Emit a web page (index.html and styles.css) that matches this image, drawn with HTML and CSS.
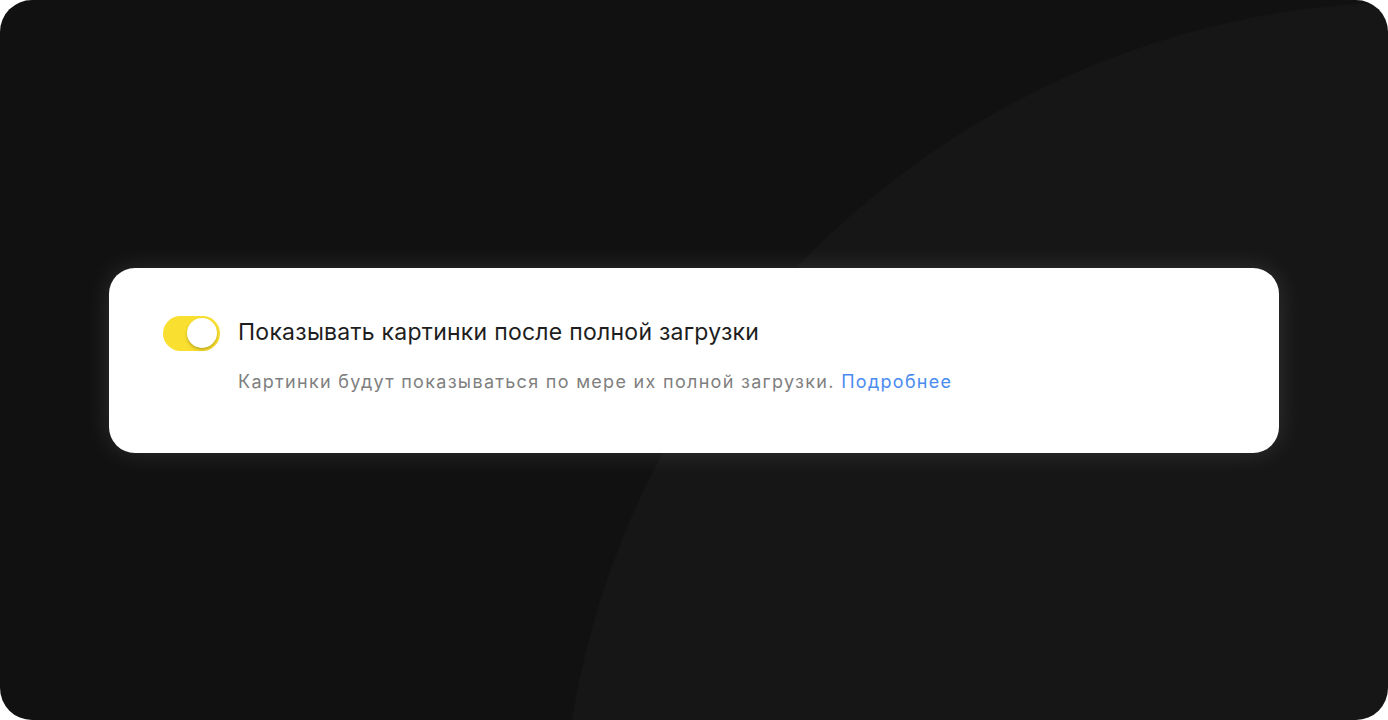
FILE: index.html
```html
<!DOCTYPE html>
<html lang="ru">
<head>
<meta charset="utf-8">
<title>Настройки</title>
<link rel="stylesheet" href="styles.css">
</head>
<body>
<div class="frame">
  <div class="card">
    <div class="row">
      <div class="toggle" role="switch" aria-checked="true"><span class="knob"></span></div>
      <div class="title">Показывать картинки после полной загрузки</div>
    </div>
    <div class="desc">Картинки будут показываться по мере их полной загрузки. <a class="link" href="#">Подробнее</a></div>
  </div>
</div>
</body>
</html>
```
FILE: styles.css
```css
html, body {
  margin: 0;
  padding: 0;
  background: #ffffff;
}
.frame {
  width: 1388px;
  height: 720px;
  box-sizing: border-box;
  border-radius: 32px;
  overflow: hidden;
  background: radial-gradient(circle 857px at 1417px 858px, #161616 99.8%, #111111 100%);
  display: flex;
  align-items: center;
  padding: 0 109px;
  font-family: Inter, "Noto Sans", sans-serif;
}
.card {
  flex: 1;
  background: #ffffff;
  border-radius: 26px;
  box-shadow: 0 0 26px rgba(255, 255, 255, 0.12);
  padding: 48px 54px 58px;
}
.row {
  display: flex;
  align-items: center;
  gap: 18px;
}
.toggle {
  width: 57px;
  height: 35px;
  border-radius: 18px;
  background: #f9df30;
  display: flex;
  align-items: center;
  justify-content: flex-end;
  padding: 0 3px;
  box-sizing: border-box;
  flex: none;
}
.knob {
  width: 30px;
  height: 30px;
  border-radius: 50%;
  background: #ffffff;
  box-shadow: 0 2px 3px rgba(90, 80, 0, 0.35);
}
.title {
  font-size: 23px;
  letter-spacing: 0.25px;
  line-height: 34px;
  margin-top: -2px;
  color: #1e1e1e;
}
.desc {
  margin-left: 75px;
  margin-top: 18px;
  font-size: 18px;
  letter-spacing: 1.3px;
  line-height: 26px;
  color: #7f7f7f;
}
.link {
  color: #4a8cf0;
  text-decoration: none;
}
```
